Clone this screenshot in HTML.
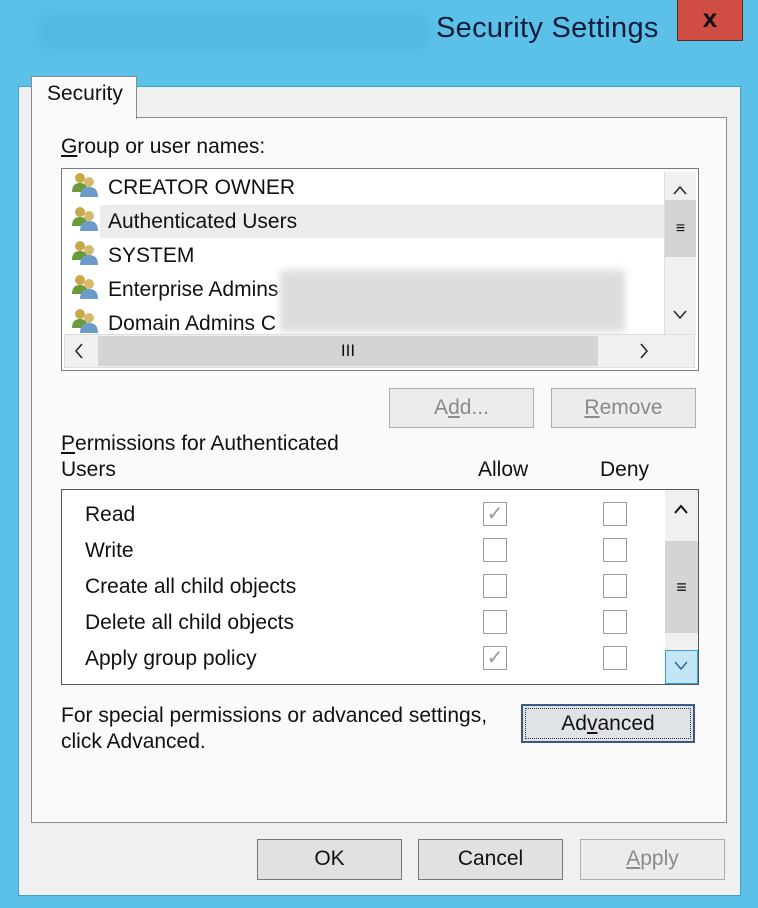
<!DOCTYPE html>
<html><head><style>
*{margin:0;padding:0;box-sizing:border-box}
body{width:758px;height:908px;background:#5cc1e9;position:relative;overflow:hidden;font-family:"Liberation Sans",sans-serif;color:#111}
.a{position:absolute}
.t{font-size:21px;white-space:nowrap;letter-spacing:0}
.btn{position:absolute;border:1px solid #777;background:#e1e1e1;font-size:21px;text-align:center;line-height:38px}
.dis{border-color:#adadad;background:#ececec;color:#8a8a8a}
.cb{position:absolute;width:24px;height:24px;border:1px solid #999;background:#fff}
.ck{color:#999;font-size:20px;line-height:22px;text-align:center}
.ar{position:absolute;font-size:17px;color:#222;text-align:center;width:32px}
</style></head><body>
<div class="a" style="left:40px;top:15px;width:390px;height:34px;background:#4eb3dc;filter:blur(6px);opacity:.6"></div>
<div class="a t" style="left:436px;top:12px;font-size:29px;color:#0d1d3a;letter-spacing:0.3px">Security Settings</div>
<div class="a" style="left:677px;top:0;width:66px;height:41px;background:#cf4d43;border:1px solid #5a2a26;border-top:none;color:#111;font-size:26px;font-weight:bold;text-align:center;line-height:36px">x</div>
<div class="a" style="left:18px;top:86px;width:723px;height:810px;background:#f0f0f0;border:1px solid #3fa0c8"></div>
<div class="a" style="left:31px;top:117px;width:696px;height:706px;border:1px solid #8c8c8c;background:#fafafa"></div>
<div class="a" style="left:31px;top:76px;width:106px;height:43px;border:1px solid #8c8c8c;border-bottom:none;background:#fafafa"></div>
<div class="a t" style="left:47px;top:82px">Security</div>
<div class="a t" style="left:61px;top:135px"><u>G</u>roup or user names:</div>
<div class="a" style="left:61px;top:168px;width:638px;height:203px;border:1px solid #7a7a7a;background:#fff"></div>
<div class="a" style="left:100px;top:205px;width:564px;height:33px;background:#ececec"></div>
<div class="a t" style="left:108px;top:176px">CREATOR OWNER</div>
<div class="a t" style="left:108px;top:210px">Authenticated Users</div>
<div class="a t" style="left:108px;top:244px">SYSTEM</div>
<div class="a t" style="left:108px;top:278px">Enterprise Admins</div>
<div class="a t" style="left:108px;top:312px">Domain Admins C</div>
<div class="a" style="left:280px;top:270px;width:345px;height:62px;background:#ddd;filter:blur(4px)"></div>
<svg class="a" style="left:70px;top:170px" width="34" height="170">
<g id="u"><circle cx="10" cy="8" r="5" fill="#c8a94a"/><path d="M2 22 Q2 13 10 13 Q18 13 18 22Z" fill="#6a9a3a"/><circle cx="19" cy="12" r="5" fill="#d6b870"/><path d="M10 27 Q10 17 19 17 Q28 17 28 27Z" fill="#6b9bc9"/></g>
<use href="#u" y="34"/><use href="#u" y="68"/><use href="#u" y="102"/><use href="#u" y="136"/>
</svg>
<div class="a" style="left:664px;top:172px;width:32px;height:162px;background:#f0f0f0;border-left:1px solid #ddd"></div>
<div class="a" style="left:665px;top:200px;width:31px;height:57px;background:#d4d4d4;text-align:center;font-size:16px;line-height:57px">≡</div>
<svg class="a" style="left:664px;top:172px" width="32" height="162"><path d="M10 22 L16 15 L22 22" fill="none" stroke="#222" stroke-width="1.5"/><path d="M10 139 L16 146 L22 139" fill="none" stroke="#222" stroke-width="1.5"/></svg>
<div class="a" style="left:64px;top:334px;width:631px;height:34px;background:#f0f0f0;border:1px solid #ddd"></div>
<div class="a" style="left:98px;top:336px;width:500px;height:30px;background:#d4d4d4;text-align:center;font-size:17px;line-height:30px">III</div>
<svg class="a" style="left:64px;top:334px" width="631" height="34"><path d="M18 10 L12 17 L18 24" fill="none" stroke="#222" stroke-width="1.5"/><path d="M577 10 L583 17 L577 24" fill="none" stroke="#222" stroke-width="1.5"/></svg>
<div class="btn dis" style="left:389px;top:388px;width:145px;height:40px">A<u>d</u>d...</div>
<div class="btn dis" style="left:551px;top:388px;width:145px;height:40px"><u>R</u>emove</div>
<div class="a t" style="left:61px;top:432px"><u>P</u>ermissions for Authenticated</div>
<div class="a t" style="left:61px;top:458px">Users</div>
<div class="a t" style="left:478px;top:458px">Allow</div>
<div class="a t" style="left:600px;top:458px">Deny</div>
<div class="a" style="left:61px;top:489px;width:638px;height:196px;border:1px solid #555;background:#fff"></div>
<div class="a t" style="left:85px;top:503px">Read</div>
<div class="a t" style="left:85px;top:539px">Write</div>
<div class="a t" style="left:85px;top:575px">Create all child objects</div>
<div class="a t" style="left:85px;top:611px">Delete all child objects</div>
<div class="a t" style="left:85px;top:647px">Apply group policy</div>
<div class="cb ck" style="left:483px;top:502px">✓</div><div class="cb" style="left:603px;top:502px"></div>
<div class="cb" style="left:483px;top:538px"></div><div class="cb" style="left:603px;top:538px"></div>
<div class="cb" style="left:483px;top:574px"></div><div class="cb" style="left:603px;top:574px"></div>
<div class="cb" style="left:483px;top:610px"></div><div class="cb" style="left:603px;top:610px"></div>
<div class="cb ck" style="left:483px;top:646px">✓</div><div class="cb" style="left:603px;top:646px"></div>
<div class="a" style="left:665px;top:490px;width:33px;height:194px;background:#f0f0f0"></div>
<div class="a" style="left:665px;top:541px;width:33px;height:92px;background:#d4d4d4;text-align:center;font-size:18px;font-weight:bold;line-height:92px">≡</div>
<div class="a" style="left:665px;top:650px;width:33px;height:34px;background:#c3e6f7;border:1px solid #3c9fd0"></div>
<svg class="a" style="left:665px;top:490px" width="33" height="194"><path d="M10 23 L16 16 L22 23" fill="none" stroke="#111" stroke-width="2"/><path d="M10 172 L16 179 L22 172" fill="none" stroke="#2a6a9a" stroke-width="1.5"/></svg>
<div class="a t" style="left:61px;top:704px">For special permissions or advanced settings,</div>
<div class="a t" style="left:61px;top:730px">click Advanced.</div>
<div class="btn" style="left:521px;top:704px;width:174px;height:39px;border:2px solid #3a5a8a;background:#dfe3e8;outline:1px dotted #333;outline-offset:-5px;line-height:35px">Ad<u>v</u>anced</div>
<div class="btn" style="left:257px;top:839px;width:145px;height:41px">OK</div>
<div class="btn" style="left:418px;top:839px;width:145px;height:41px">Cancel</div>
<div class="btn dis" style="left:580px;top:839px;width:145px;height:41px"><u>A</u>pply</div>
</body></html>
